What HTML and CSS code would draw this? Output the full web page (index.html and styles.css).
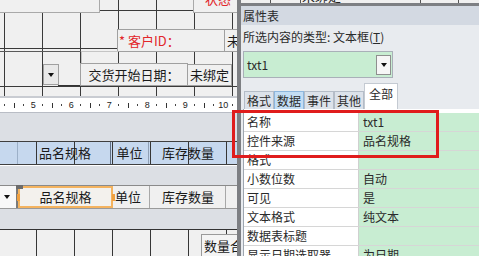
FILE: index.html
```html
<!DOCTYPE html>
<html lang="zh-CN">
<head>
<meta charset="utf-8">
<title>属性表</title>
<link rel="stylesheet" href="styles.css">
</head>
<body>
<div class="screen">
  <div class="design">
    <div class="sec-top">
      <div class="ctl box-top"></div>
      <div class="ctl lbl-status">* 状态</div>
      <div class="ctl lbl-cust">* 客户ID：</div>
      <div class="ctl txt-cust">未绑定</div>
      <div class="ctl hline-a"></div>
      <div class="ctl ghost-box"></div>
      <div class="ctl drop-btn"><span class="tri"></span></div>
      <div class="ctl hline-b"></div>
      <div class="ctl lbl-date">交货开始日期：</div>
      <div class="ctl txt-date">未绑定</div>
    </div>
    <div class="ruler">
      <span class="rc"><i class="dot"></i></span><span class="rc"><i class="tick"></i></span><span class="rc"><i class="dot"></i></span><span class="rc">5</span>
      <span class="rc"><i class="dot"></i></span><span class="rc"><i class="tick"></i></span><span class="rc"><i class="dot"></i></span><span class="rc">6</span>
      <span class="rc"><i class="dot"></i></span><span class="rc"><i class="tick"></i></span><span class="rc"><i class="dot"></i></span><span class="rc">7</span>
      <span class="rc"><i class="dot"></i></span><span class="rc"><i class="tick"></i></span><span class="rc"><i class="dot"></i></span><span class="rc">8</span>
      <span class="rc"><i class="dot"></i></span><span class="rc"><i class="tick"></i></span><span class="rc"><i class="dot"></i></span><span class="rc">9</span>
      <span class="rc"><i class="dot"></i></span><span class="rc"><i class="tick"></i></span><span class="rc"><i class="dot"></i></span><span class="rc">10</span>
      <span class="rc"><i class="dot"></i></span>
    </div>
    <div class="band band-1"></div>
    <div class="row-hdr">
      <div class="hc hc-1"></div>
      <div class="hc hc-2"></div>
      <div class="hc hc-name">品名规格</div>
      <div class="hc hc-unit">单位</div>
      <div class="hc hc-qty">库存数量</div>
    </div>
    <div class="band band-2"></div>
    <div class="row-det">
      <div class="dc dc-drop"><span class="tri"></span></div>
      <div class="dc dc-sel">品名规格</div>
      <div class="dc dc-unit">单位</div>
      <div class="dc dc-qty">库存数量</div>
      <span class="hd hd-move"></span>
      <span class="hd hd-l"></span>
      <span class="hd hd-r"></span>
    </div>
    <div class="band band-3"></div>
    <div class="sec-bottom">
      <div class="ctl lbl-sum">数量合计</div>
    </div>
  </div>

  <div class="panel">
    <div class="peek"><span class="peek-text">未绑定</span></div>
    <div class="win">
      <div class="title">属性表</div>
      <div class="sel-type">所选内容的类型: 文本框(<u>T</u>)</div>
      <div class="combo"><span>txt1</span><span class="combo-btn"><span class="tri"></span></span></div>
      <div class="tabs">
        <span class="tab">格式</span>
        <span class="tab tab-hl">数据</span>
        <span class="tab">事件</span>
        <span class="tab">其他</span>
        <span class="tab tab-on">全部</span>
      </div>
      <div class="grid">
        <div class="prow"><span class="pn">名称</span><span class="pv">txt1</span></div>
        <div class="prow"><span class="pn">控件来源</span><span class="pv">品名规格</span></div>
        <div class="prow"><span class="pn">格式</span><span class="pv"></span></div>
        <div class="prow"><span class="pn">小数位数</span><span class="pv">自动</span></div>
        <div class="prow"><span class="pn">可见</span><span class="pv">是</span></div>
        <div class="prow"><span class="pn">文本格式</span><span class="pv">纯文本</span></div>
        <div class="prow"><span class="pn">数据表标题</span><span class="pv"></span></div>
        <div class="prow"><span class="pn">显示日期选取器</span><span class="pv">为日期</span></div>
      </div>
    </div>
  </div>

  <div class="hl-box"></div>
</div>
</body>
</html>
```

FILE: styles.css
```css
* {
  box-sizing: border-box;
  margin: 0;
  padding: 0;
}

body {
  margin: 0;
  font-family: "Noto Sans CJK SC", "Noto Sans", sans-serif;
  font-size: 13px;
  color: #1a1a1a;
  background: #f0f0f0;
}

.screen {
  position: relative;
  width: 479px;
  height: 256px;
  overflow: hidden;
  display: flex;
}

/* ---------- design surface ---------- */
.design {
  width: 237px;
  flex: none;
  display: flex;
  flex-direction: column;
  overflow: hidden;
}

.sec-top {
  position: relative;
  height: 96px;
  flex: none;
  background:
    linear-gradient(to right, #3a3a3a 0 1px, transparent 1px) 4px 0 / 38px 100%,
    linear-gradient(to bottom, #3a3a3a 0 1px, transparent 1px) 0 10px / 100% 38px,
    #f0f0f0;
}

.ctl {
  position: absolute;
  white-space: nowrap;
}

.box-top {
  left: -1px;
  top: -1px;
  width: 101px;
  height: 14px;
  border: 1px solid #a9a9a9;
  background: #f0f0f0;
}

.lbl-status {
  left: 193px;
  top: -12px;
  width: 60px;
  height: 25px;
  border: 1px solid #a9a9a9;
  background: #f0f0f0;
  color: #e2262a;
  line-height: 19px;
  padding-left: 2px;
}

.lbl-cust {
  left: 117px;
  top: 29px;
  width: 108px;
  height: 23px;
  border: 1px solid #a0a0a0;
  background: #f0f0f0;
  color: #e2262a;
  line-height: 21px;
  padding-left: 1px;
}

.txt-cust {
  left: 224px;
  top: 29px;
  width: 44px;
  height: 23px;
  border: 1px solid #a0a0a0;
  background: #f0f0f0;
  line-height: 21px;
  padding-left: 2px;
}

.hline-a {
  left: 0;
  top: 51px;
  width: 81px;
  height: 1px;
  background: #5a5a5a;
}

.ghost-box {
  left: 81px;
  top: 51px;
  width: 37px;
  height: 13px;
  border: 1px solid #c4c4c4;
  border-right: none;
}

.drop-btn {
  left: 43px;
  top: 64px;
  width: 16px;
  height: 21px;
  border: 1px solid #a0a0a0;
  background: #e9e9e9;
  display: flex;
  align-items: center;
  justify-content: center;
}

.tri {
  display: block;
  width: 0;
  height: 0;
  border-left: 3.5px solid transparent;
  border-right: 3.5px solid transparent;
  border-top: 4px solid #111;
}

.hline-b {
  left: 58px;
  top: 85px;
  width: 23px;
  height: 1px;
  background: #333;
}

.lbl-date {
  left: 80px;
  top: 63px;
  width: 108px;
  height: 23px;
  border: 1px solid #a0a0a0;
  background: #f0f0f0;
  text-align: center;
  line-height: 21px;
}

.txt-date {
  left: 187px;
  top: 64px;
  width: 45px;
  height: 22px;
  border: 1px solid #a0a0a0;
  background: #f0f0f0;
  line-height: 20px;
  padding-left: 2px;
}

/* ruler */
.ruler {
  height: 17px;
  flex: none;
  border-top: 2px solid #c9ccd2;
  border-bottom: 1px solid #b9bdc5;
  background: #fff;
  display: flex;
  align-items: center;
}

.rc {
  width: 9.5px;
  flex: none;
  display: flex;
  justify-content: center;
  align-items: center;
  font-family: "Liberation Sans", sans-serif;
  font-size: 9px;
  line-height: 10px;
  color: #222;
}

.dot {
  display: block;
  width: 1px;
  height: 2px;
  background: #444;
}

.tick {
  display: block;
  width: 1px;
  height: 5px;
  background: #333;
}

/* section bands */
.band {
  flex: none;
  background: #dcdfe4;
}

.band-1 {
  height: 28px;
}

.band-2 {
  height: 20px;
  border-top: 1px solid #fff;
}

.band-3 {
  height: 20px;
}

/* header row */
.row-hdr {
  height: 24px;
  flex: none;
  display: flex;
  border-top: 1px solid #3f3f3f;
  border-bottom: 1px solid #3f3f3f;
  background:
    linear-gradient(to right, #363636 0 1px, transparent 1px) 36px 0 / 38px 100%,
    #c6d8ee;
}

.hc {
  flex: none;
  line-height: 22px;
  white-space: nowrap;
}

.hc-1 {
  width: 18px;
  border-right: 1px solid #9cb0c8;
}

.hc-2 {
  width: 18px;
}

.hc-name {
  width: 75px;
  padding-left: 3px;
  border-right: 1px solid #5f6f85;
}

.hc-unit {
  width: 38px;
  text-align: center;
  border-right: 1px solid #8fa0b5;
}

.hc-qty {
  width: 76px;
  padding-left: 13px;
}

/* detail row */
.row-det {
  position: relative;
  height: 24px;
  flex: none;
  display: flex;
  border-top: 1px solid #8a8a8a;
  border-bottom: 1px solid #9a9a9a;
  background: #f0f0f0;
}

.dc {
  flex: none;
  white-space: nowrap;
  line-height: 22px;
}

.dc-drop {
  width: 18px;
  border-right: 2px solid #7a7a7a;
  background: #f8f8f8;
  display: flex;
  align-items: center;
  justify-content: center;
  padding-right: 2px;
}

.dc-sel {
  width: 95px;
  border: 2px solid #f4b35f;
  background: #f3f1ed;
  text-align: center;
  line-height: 18px;
}

.dc-unit {
  width: 37px;
  padding-left: 2px;
  border-right: 1px solid #a8a8a8;
}

.dc-qty {
  width: 76px;
  padding-left: 12px;
  border-right: 1px solid #a8a8a8;
}

.hd {
  position: absolute;
  display: block;
}

.hd-move {
  left: 16px;
  top: -1px;
  width: 7px;
  height: 4px;
  background: #6c6c6c;
}

.hd-l {
  left: 17px;
  top: 8px;
  width: 3px;
  height: 7px;
  background: #f0a040;
}

.hd-r {
  left: 112px;
  top: 8px;
  width: 3px;
  height: 7px;
  background: #f0a040;
}

/* bottom section */
.sec-bottom {
  position: relative;
  flex: 1;
  border-top: 1px solid #333;
  background:
    linear-gradient(to right, #363636 0 1px, transparent 1px) 36px 0 / 38px 100%,
    #f0f0f0;
}

.lbl-sum {
  left: 201px;
  top: 4px;
  width: 60px;
  height: 24px;
  border: 1px solid #9a9a9a;
  background: #f4f4f4;
  padding-left: 2px;
  line-height: 22px;
}

/* ---------- property sheet ---------- */
.panel {
  flex: 1;
  min-width: 0;
  border-left: 4px solid #7d7f83;
  display: flex;
  flex-direction: column;
  background: #e8ebef;
  font-size: 12px;
  color: #2a2a2a;
}

.peek {
  height: 3px;
  flex: none;
  overflow: hidden;
  position: relative;
  background:
    linear-gradient(to right, transparent 29px, #555 29px 30px, transparent 30px 59px, #555 59px 60px, transparent 60px 179px, #555 179px 180px, transparent 180px 217px, #555 217px 218px, transparent 218px),
    #f0f0f0;
}

.peek-text {
  position: absolute;
  left: 61px;
  top: -12px;
  font-size: 13px;
  line-height: 16px;
  color: #222;
}

.win {
  flex: 1;
  border-top: 3px solid #7d7f83;
  padding-left: 2px;
  display: flex;
  flex-direction: column;
}

.title {
  height: 19px;
  line-height: 19px;
  margin-left: -2px;
  padding-left: 2px;
  background: #d3d9e2;
  flex: none;
}

.sel-type {
  margin-top: 4px;
  height: 16px;
  line-height: 16px;
  flex: none;
  white-space: nowrap;
}

.combo {
  margin-top: 6px;
  width: 150px;
  height: 27px;
  flex: none;
  border: 1px solid #a9b0b8;
  background: #c8edd2;
  display: flex;
  align-items: center;
  justify-content: space-between;
  padding: 0 0 0 3px;
  padding-right: 1px;
}

.combo-btn {
  width: 15px;
  height: 20px;
  border: 1px solid #8f8f8f;
  background: #f6f6f6;
  display: flex;
  align-items: center;
  justify-content: center;
}

.tabs {
  margin-top: 5px;
  height: 26px;
  flex: none;
  display: flex;
  align-items: flex-end;
  padding-left: 1px;
}

.tab {
  height: 18px;
  padding: 0 2px;
  border: 1px solid #b4bcc7;
  border-bottom: none;
  background: #dce2ea;
  line-height: 17px;
  white-space: nowrap;
}

.tab-hl {
  background: #c3ddf4;
  border-color: #8db6dd;
}

.tab-on {
  height: 26px;
  padding: 0 4px;
  background: #fff;
  border-color: #c4cad2;
  line-height: 20px;
}

.grid {
  flex: 1;
  border-left: 1px solid #9ea6b0;
  background: #fff;
  padding-top: 4px;
}

.prow {
  display: flex;
  height: 19px;
  border-bottom: 1px solid #d6d6d6;
}

.pn {
  width: 115px;
  flex: none;
  padding-left: 3px;
  border-right: 1px solid #d0d0d0;
  line-height: 18px;
  white-space: nowrap;
  overflow: hidden;
}

.pv {
  flex: 1;
  padding-left: 4px;
  line-height: 18px;
  background: #c8edd2;
  white-space: nowrap;
}

/* annotation */
.hl-box {
  position: absolute;
  left: 232px;
  top: 110px;
  width: 207px;
  height: 48px;
  border: 3px solid #e01c1c;
}
```
